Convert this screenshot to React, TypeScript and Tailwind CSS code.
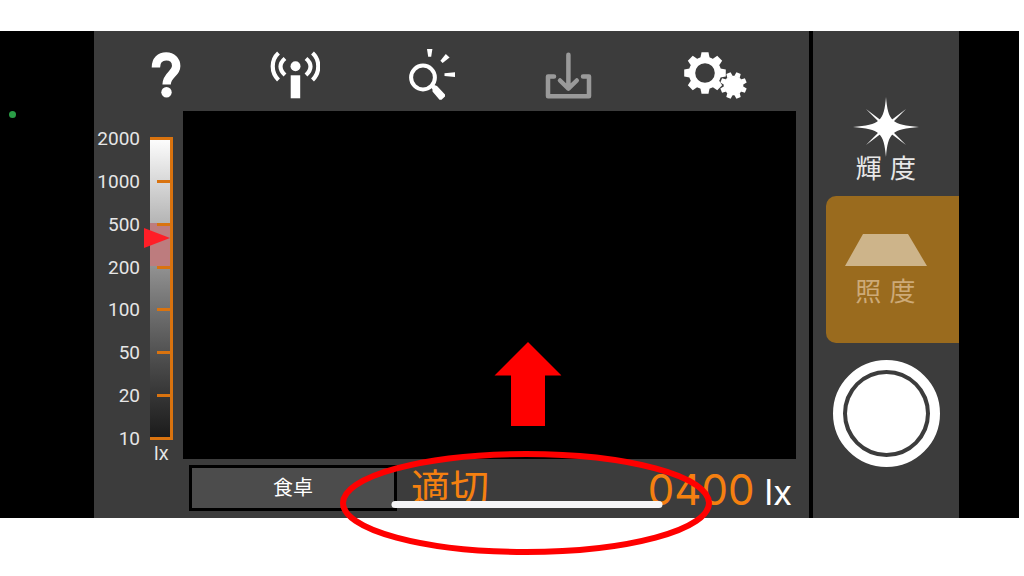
import React from 'react';

interface ModeButtonProps {
  label: string;
  active?: boolean;
  children: React.ReactNode;
}

const scaleValues = [2000, 1000, 500, 200, 100, 50, 20, 10];
const toothAngles = [0, 45, 90, 135, 180, 225, 270, 315];

const HelpIcon = () => (
  <svg width="30" height="46" viewBox="0 0 30 46" fill="none" aria-hidden="true">
    <path d="M4.9 15.5C4.9 8.3 9.2 4.4 15.2 4.4C21.2 4.4 25.2 8.6 25.2 14C25.2 22 15.8 22.5 15.6 32.5" stroke="white" strokeWidth="8.4" />
    <circle cx="15.5" cy="40.3" r="5.2" fill="white" />
  </svg>
);

const InfoIcon = () => (
  <svg width="50" height="48" viewBox="0 0 50 48" fill="none" aria-hidden="true">
    <g stroke="white" strokeWidth="4.2">
      <path d="M8.5 2C0.8 9 0.8 21.5 8.5 29" />
      <path d="M15 7.5C9 12.5 9 18.5 15 24" />
      <path d="M42.5 2C50.2 9 50.2 21.5 42.5 29" />
      <path d="M36 7.5C42 12.5 42 18.5 36 24" />
    </g>
    <circle cx="25.5" cy="15.3" r="5" fill="white" />
    <rect x="20.7" y="24.3" width="9.5" height="23" fill="white" />
  </svg>
);

const SearchIcon = () => (
  <svg width="47" height="54" viewBox="0 0 47 54" fill="none" aria-hidden="true">
    <circle cx="14" cy="29.5" r="11.9" stroke="white" strokeWidth="4" />
    <g fill="white">
      <path d="M21.5 38.5L24 36.5L28 38L36 46.5V48.5L32.5 51.8H30.5L23.5 43.5V41.5Z" />
      <path d="M18 1H23.4L22.2 8.8H19.2Z" />
      <path d="M36.8 6L40.6 9.6L33.6 15L31.4 12.8Z" />
      <path d="M35.500 25.2L46 24.2V29L35.500 28Z" />
    </g>
  </svg>
);

const SaveIcon = () => (
  <svg width="47" height="48" viewBox="0 0 47 48" fill="none" stroke="#9a9a9a" strokeWidth="4.5" strokeLinecap="round" strokeLinejoin="round" aria-hidden="true">
    <path d="M9 25.5H3V45.2H44V25.5H38" />
    <path d="M23.4 3.8V37.5M15 29.5L23.4 37.7L31.8 29.5" />
  </svg>
);

const SettingsIcon = () => (
  <svg width="66" height="54" viewBox="-3 0 66 54" aria-hidden="true">
    <g transform="translate(21 25)">
      <circle r="13" fill="none" stroke="white" strokeWidth="6.4" />
      {toothAngles.map((angle) => (
        <path key={angle} transform={`rotate(${angle})`} d="M-4.8 -14L-3.5 -20.8H3.5L4.8 -14Z" fill="white" />
      ))}
    </g>
    <g transform="translate(49.5 37.5)" fill="white">
      <circle r="9.8" />
      {toothAngles.map((angle) => (
        <path key={angle} transform={`rotate(${angle + 22.5})`} d="M-2.9 -9L-2.3 -13.3H2.3L2.9 -9Z" />
      ))}
    </g>
  </svg>
);

const StarIcon = () => (
  <svg width="66" height="60" viewBox="-33 -30 66 60" fill="white" aria-hidden="true">
    <path d="M0 -30C2 -6 6 -2 33 0C6 2 2 6 0 30C-2 6 -6 2 -33 0C-6 -2 -2 -6 0 -30Z" />
    <path d="M-20 -18L-5.8 -7.2L-7.6 -5.4ZM20 -18L5.8 -7.2L7.6 -5.4ZM-20 18L-5.8 7.2L-7.6 5.4ZM20 18L5.8 7.2L7.6 5.4Z" />
  </svg>
);

const tools = [
  { name: 'ヘルプ', icon: <HelpIcon /> },
  { name: '情報', icon: <InfoIcon /> },
  { name: '検索', icon: <SearchIcon /> },
  { name: '保存', icon: <SaveIcon /> },
  { name: '設定', icon: <SettingsIcon /> },
];

const Toolbar = () => (
  <nav className="flex h-20 items-center justify-between pl-[57px] pr-[62px] pt-2">
    {tools.map((tool) => (
      <button key={tool.name} type="button" aria-label={tool.name}>
        {tool.icon}
      </button>
    ))}
  </nav>
);

const LuxScale = () => (
  <div className="flex w-[89px] shrink-0 justify-end gap-[10px] pr-[10px] pt-[18px] text-[#e6e6e6]">
    <div className="flex h-80 flex-col justify-between text-right font-['Roboto',sans-serif] text-[19px] leading-5">
      {scaleValues.map((value) => (
        <span key={value}>{value}</span>
      ))}
    </div>
    <div className="flex w-[23px] flex-col items-center pt-2">
      <div className="relative flex h-[303px] w-full shrink-0 flex-col items-end justify-between border-r-3 border-[#d9730f] bg-linear-to-b from-white via-[#808080] to-[#1a1a1a]">
        <div className="absolute left-0 top-[86px] h-[43px] w-full bg-[#bd7c7e]" />
        {scaleValues.map((value) => (
          <span key={value} className="relative h-[3px] w-[13px] bg-[#d9730f] first-of-type:w-full last-of-type:w-full" />
        ))}
        <svg className="absolute -left-[6px] top-[91px]" width="26" height="20" viewBox="0 0 26 20" aria-hidden="true">
          <path d="M0 0L26 10L0 20Z" fill="#ff1e27" />
        </svg>
      </div>
      <span className="text-[19px] leading-7">lx</span>
    </div>
  </div>
);

const Readout = () => (
  <footer className="flex h-[59px] items-start pl-[95px] pr-[17px] pt-[6px]">
    <button type="button" className="h-[46px] w-[208px] border-3 border-black bg-[#4c4c4c] text-xl text-white">
      食卓
    </button>
    <span className="ml-[14px] text-[39px] leading-[46px] text-[#f58010]">適切</span>
    <div className="ml-auto flex items-baseline gap-[10px] leading-[50px]">
      <output className="text-[42px] text-[#f58010]">0400</output>
      <span className="text-[35px] text-white">lx</span>
    </div>
  </footer>
);

const ModeButton: React.FC<ModeButtonProps> = ({ label, active = false, children }) => (
  <button
    type="button"
    aria-pressed={active}
    className={
      active
        ? 'ml-[13px] flex h-[147px] flex-col items-center gap-[14px] self-stretch rounded-l-[10px] bg-[#9a6b1e] pr-[14px] pt-[38px] text-[#cdaa78]'
        : 'flex h-[99px] flex-col items-center text-[#e8e8e8]'
    }
  >
    {children}
    <span className="font-['DejaVu_Sans','Noto_Sans_CJK_JP',sans-serif] text-[26px] leading-6">
      {label}
    </span>
  </button>
);

export default function App() {
  return (
    <main className="min-h-screen w-full bg-white pr-[5px] pt-[31px] font-['Inter','Noto_Sans_CJK_JP',sans-serif]">
      <div className="flex bg-black">
        <div className="w-[94px] shrink-0 pl-[9px] pt-20">
          <div className="size-[7px] rounded-full bg-[#2a9d46]" />
        </div>

        <div className="relative flex min-w-0 flex-1 bg-[#3c3c3c]">
          <section className="min-w-0 flex-1">
            <Toolbar />
            <div className="flex h-[348px] pr-[13px]">
              <LuxScale />
              <div className="flex-1 bg-black" />
            </div>
            <Readout />
          </section>

          <aside className="flex w-[150px] shrink-0 flex-col items-center border-l-4 border-black pt-[66px]">
            <ModeButton label="輝 度">
              <StarIcon />
            </ModeButton>
            <ModeButton label="照 度" active>
              <svg width="82" height="32" viewBox="0 0 82 32" aria-hidden="true">
                <path d="M18 0H63L82 32H0Z" fill="#cdb48a" />
              </svg>
            </ModeButton>
            <button type="button" aria-label="撮影" className="mt-[17px] flex size-[107px] items-center justify-center rounded-full border-10 border-white">
              <span className="size-[79px] rounded-full bg-white" />
            </button>
          </aside>

          {/* Swipe-up hint over the home indicator */}
          <div className="absolute bottom-[10px] left-1/2 h-[7px] w-[271px] -translate-x-1/2 rounded-full bg-[#f5f5f7]" />
          <svg className="absolute bottom-[92px] left-1/2 -translate-x-1/2" width="69" height="84" viewBox="-2 0 69 84" aria-hidden="true">
            <path d="M33.5 0L67 33.5H50.5V84H16.5V33.5H0Z" fill="#ff0000" />
          </svg>
          <svg className="absolute -bottom-[37px] left-1/2 -translate-x-1/2" width="374" height="104" viewBox="0 0 374 104" fill="none" aria-hidden="true">
            <ellipse cx="186" cy="52" rx="183" ry="49" stroke="#ff0000" strokeWidth="6" />
          </svg>
        </div>

        <div className="w-[60px] shrink-0" />
      </div>
    </main>
  );
}
